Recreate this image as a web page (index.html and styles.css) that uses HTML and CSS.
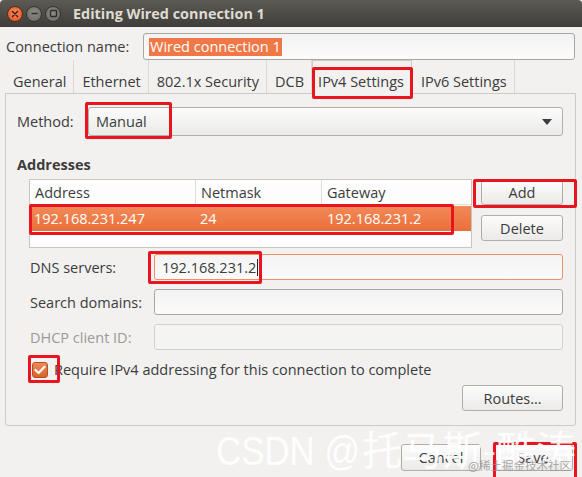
FILE: index.html
```html
<!DOCTYPE html>
<html>
<head>
<meta charset="utf-8">
<title>Editing Wired connection 1</title>
<link rel="stylesheet" href="styles.css">
</head>
<body>
<div class="window">
  <div class="titlebar">
    <div class="wbtns">
      <span class="wbtn close"><svg width="8" height="8" viewBox="0 0 8 8"><path d="M1.5 1.5 L6.5 6.5 M6.5 1.5 L1.5 6.5" stroke="#3a1a0c" stroke-width="1.4" stroke-linecap="round"/></svg></span>
      <span class="wbtn"><svg width="9" height="9" viewBox="0 0 9 9"><path d="M1.5 4.5 H7.5" stroke="#2e2d2a" stroke-width="1.5"/></svg></span>
      <span class="wbtn"><svg width="9" height="9" viewBox="0 0 9 9"><rect x="1.5" y="1.5" width="6" height="6" rx="0.8" fill="none" stroke="#2e2d2a" stroke-width="1.3"/></svg></span>
    </div>
    <div class="title">Editing Wired connection 1</div>
  </div>

  <div class="body">
    <div class="name-row">
      <div class="name-label">Connection name:</div>
      <div class="entry name-entry"><span class="sel">Wired connection 1</span></div>
    </div>

    <div class="tabs">
      <div class="tab">General</div>
      <div class="tab">Ethernet</div>
      <div class="tab">802.1x Security</div>
      <div class="tab">DCB</div>
      <div class="tab active">IPv4 Settings</div>
      <div class="tab">IPv6 Settings</div>
    </div>

    <div class="panel">
      <div class="method-row">
        <div class="method-label">Method:</div>
        <div class="combo">
          <span>Manual</span>
          <svg class="arrow" width="10" height="6" viewBox="0 0 10 6"><path d="M0 0 H10 L5 6 Z" fill="#3c3c3c"/></svg>
        </div>
      </div>

      <div class="section-title">Addresses</div>

      <div class="addr-area">
        <div class="table">
          <div class="trow thead">
            <div class="c1">Address</div>
            <div class="c2">Netmask</div>
            <div class="c3">Gateway</div>
          </div>
          <div class="trow tsel">
            <div class="c1">192.168.231.247</div>
            <div class="c2">24</div>
            <div class="c3">192.168.231.2</div>
          </div>
        </div>
        <div class="addr-btns">
          <button class="btn">Add</button>
          <button class="btn">Delete</button>
        </div>
      </div>

      <div class="fields">
        <div class="field">
          <div class="flabel">DNS servers:</div>
          <div class="entry focus"><span class="val">192.168.231.2</span><span class="caret"></span></div>
        </div>
        <div class="field">
          <div class="flabel">Search domains:</div>
          <div class="entry"></div>
        </div>
        <div class="field">
          <div class="flabel dim">DHCP client ID:</div>
          <div class="entry disabled"></div>
        </div>
      </div>

      <div class="check-row">
        <span class="checkbox"><svg width="12" height="10" viewBox="0 0 12 10"><path d="M1.5 5 L4.6 8 L10.5 1.8" fill="none" stroke="#fff" stroke-width="2.2" stroke-linecap="round" stroke-linejoin="round"/></svg></span>
        <span class="check-label">Require IPv4 addressing for this connection to complete</span>
      </div>

      <div class="routes-row">
        <button class="btn routes">Routes…</button>
      </div>
    </div>

    <div class="footer">
      <button class="btn fbtn">Cancel</button>
      <button class="btn fbtn">Save</button>
    </div>
  </div>

  <div class="mark m-tab"></div>
  <div class="mark m-method"></div>
  <div class="mark m-add"></div>
  <div class="mark m-row"></div>
  <div class="mark m-dns"></div>
  <div class="mark m-check"></div>
  <div class="mark m-save"></div>

  <div class="wm-big"><span class="wm-lat">CSDN @</span><span class="wm-cjk">托马斯-酷涛</span></div>
  <div class="wm-small">@稀土掘金技术社区</div>
</div>
</body>
</html>
```

FILE: styles.css
```css
* { box-sizing: border-box; }
html, body { margin: 0; padding: 0; }
body {
  width: 582px;
  height: 477px;
  overflow: hidden;
  background: #f2f1f0;
  font-family: "Open Sans", "Noto Sans", sans-serif;
  font-size: 14.5px;
  color: #3c3c3c;
}
.window {
  position: relative;
  width: 582px;
  height: 477px;
  background: #f2f1f0;
}
.titlebar {
  height: 27px;
  background: linear-gradient(#5c5a53, #3e3d39);
  display: flex;
  align-items: center;
  padding-left: 7px;
  border-radius: 4px 4px 0 0;
}
.wbtns { display: flex; gap: 3px; }
.wbtn {
  width: 16px;
  height: 16px;
  border-radius: 50%;
  background: radial-gradient(circle at 50% 40%, #8c8a84, #6a6863);
  border: 1px solid #35342f;
  display: flex;
  align-items: center;
  justify-content: center;
}
.wbtn.close {
  background: radial-gradient(circle at 50% 40%, #f58a5e, #e2501e);
  border-color: #5a2a16;
}
.title {
  margin-left: 12px;
  color: #dfdbd2;
  font-weight: 700;
  font-size: 14.4px;
  line-height: 20px;
  margin-top: 1px;
}
.body {
  padding: 6px 6px 0 5px;
}
.name-row {
  display: flex;
  align-items: center;
  height: 27px;
}
.name-label {
  width: 138px;
  padding-left: 1px;
}
.entry {
  flex: 1;
  height: 26px;
  border: 1px solid #aaa7a3;
  border-radius: 3px;
  background: linear-gradient(#f3f3f3, #fbfbfb);
  display: flex;
  align-items: center;
  padding-left: 5px;
}
.name-entry { height: 27px; margin-right: 1px; }
.sel {
  background: #f07746;
  color: #fff;
  padding: 0 1px;
  line-height: 18px;
}
.tabs {
  display: flex;
  height: 33px;
  align-items: stretch;
}
.tab {
  padding: 13px 7px 0 8px;
  border-right: 1px solid #dcd8d3;
  line-height: 18px;
}
.tab.active {
  border: 1px solid #cfcac4;
  border-bottom: none;
  padding: 12px 7px 0 5px;
  margin-bottom: -1px;
  background: #f2f1f0;
  position: relative;
  z-index: 1;
}
.tab.active + .tab { padding-left: 9px; }
.panel {
  border: 1px solid #cfcac4;
  border-radius: 0 0 3px 3px;
  height: 333px;
  padding: 13px 12px 0 11px;
}
.method-row {
  display: flex;
  align-items: center;
  height: 29px;
}
.method-label { width: 71px; }
.combo {
  flex: 1;
  height: 29px;
  border: 1px solid #b3afaa;
  border-radius: 3px;
  background: linear-gradient(#fbfbfb, #ebebea);
  display: flex;
  align-items: center;
  padding: 0 10px 0 7px;
  justify-content: space-between;
}
.arrow { margin-top: 1px; }
.section-title {
  font-weight: 700;
  margin-top: 19px;
  line-height: 20px;
}
.addr-area {
  display: flex;
  margin-top: 4px;
  margin-left: 12px;
  gap: 9px;
}
.table {
  width: 444px;
  height: 69px;
  border: 1px solid #c9c4be;
  background: #fdfdfd;
}
.trow {
  display: flex;
  align-items: center;
}
.thead {
  height: 25px;
  border-bottom: 1px solid #e1ddd8;
}
.thead .c1, .thead .c2 { border-right: 1px solid #e1ddd8; }
.thead > div { height: 24px; line-height: 24px; padding-left: 5px; padding-top: 1px; }
.c1 { width: 166px; }
.c2 { width: 126px; }
.c3 { flex: 1; }
.tsel {
  height: 25px;
  margin-top: 1px;
  background: linear-gradient(#f28a58, #ea6f3a);
  color: #fff;
}
.tsel > div { padding-left: 4px; }
.tsel .c3 { padding-left: 5px; }
.addr-btns {
  display: flex;
  flex-direction: column;
  gap: 10px;
  padding-top: 1px;
}
.btn {
  font-family: inherit;
  font-size: inherit;
  color: #3c3c3c;
  border: 1px solid #b2ada7;
  border-radius: 3px;
  background: linear-gradient(#fcfcfc, #ebeae9);
  height: 24px;
  padding: 0;
  width: 82px;
}
.addr-btns .btn:first-child { height: 25px; }
.addr-btns .btn:last-child { height: 26px; }
.fields {
  margin-top: 6px;
  display: flex;
  flex-direction: column;
  gap: 9px;
}
.field {
  display: flex;
  align-items: center;
}
.flabel {
  width: 137px;
  padding-left: 13px;
}
.flabel.dim { color: #9d9a96; }
.field .entry { height: 26px; }
.entry.focus { border-color: #ef8f67; padding-left: 7px; }
.entry.disabled { border-color: #d3d0cc; background: #f4f4f3; }
.caret {
  display: inline-block;
  width: 1px;
  height: 17px;
  background: #222;
  margin-left: 1px;
}
.check-row {
  display: flex;
  align-items: center;
  margin-top: 10px;
  padding-left: 15px;
}
.checkbox {
  width: 16px;
  height: 16px;
  border-radius: 3px;
  border: 1px solid #b5521f;
  background: linear-gradient(#ef8a58, #d9622c);
  display: flex;
  align-items: center;
  justify-content: center;
  margin-right: 6px;
}
.routes-row {
  display: flex;
  justify-content: flex-end;
  margin-top: 6px;
}
.btn.routes { width: 101px; height: 26px; }
.footer {
  display: flex;
  justify-content: flex-end;
  gap: 12px;
  margin-top: 18px;
  padding-right: 3px;
}
.fbtn { width: 80px; height: 27px; }

.mark {
  position: absolute;
  border: 3px solid #e8141e;
  border-radius: 2px;
  z-index: 5;
}
.m-tab { left: 312px; top: 67px; width: 101px; height: 32px; }
.m-method { left: 85px; top: 102px; width: 87px; height: 37px; }
.m-add { left: 473px; top: 179px; width: 104px; height: 29px; }
.m-row { left: 29px; top: 204px; width: 425px; height: 31px; }
.m-dns { left: 148px; top: 251px; width: 114px; height: 33px; }
.m-check { left: 28px; top: 355px; width: 32px; height: 28px; }
.m-save { left: 493px; top: 442px; width: 84px; height: 40px; }

.wm-big {
  position: absolute;
  left: 216px;
  top: 425px;
  line-height: 46px;
  color: rgba(255, 255, 255, 0.92);
  white-space: nowrap;
  z-index: 6;
}
.wm-lat {
  display: inline-block;
  font-family: "Liberation Sans", sans-serif;
  font-size: 41px;
  transform: scaleX(0.85);
  transform-origin: left center;
  margin-right: -23px;
}
.wm-cjk {
  font-family: "Noto Sans CJK SC", sans-serif;
  font-size: 40px;
}
.wm-small {
  position: absolute;
  left: 468px;
  top: 457px;
  font-family: "Noto Sans CJK SC", sans-serif;
  font-size: 11.5px;
  color: rgba(150, 150, 150, 0.85);
  white-space: nowrap;
  z-index: 7;
}
```
